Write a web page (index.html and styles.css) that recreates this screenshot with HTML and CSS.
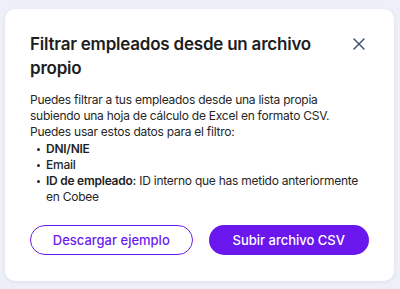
FILE: index.html
```html
<!DOCTYPE html>
<html lang="es">
<head>
<meta charset="utf-8">
<link rel="stylesheet" href="styles.css">
</head>
<body>
<div class="modal">
  <div class="header">
    <h1 class="title">Filtrar empleados desde un archivo propio</h1>
    <button class="close" aria-label="Cerrar">
      <svg width="12" height="12" viewBox="0 0 12 12"><path d="M1 1L11 11M11 1L1 11" stroke="#3e5674" stroke-width="1.5" stroke-linecap="round"/></svg>
    </button>
  </div>
  <div class="body">
    <p>Puedes filtrar a tus empleados desde una lista propia subiendo una hoja de cálculo de Excel en formato CSV. Puedes usar estos datos para el filtro:</p>
    <ul class="list">
      <li><strong>DNI/NIE</strong></li>
      <li><span class="medium">Email</span></li>
      <li><strong>ID de empleado:</strong> ID interno que has metido anteriormente en Cobee</li>
    </ul>
  </div>
  <div class="actions">
    <button class="btn btn-outline">Descargar ejemplo</button>
    <button class="btn btn-primary">Subir archivo CSV</button>
  </div>
</div>
</body>
</html>
```
FILE: styles.css
```css
html, body {
  margin: 0;
  padding: 0;
}
body {
  background: #eef0f9;
  padding: 9px 6px 8px 5px;
  font-family: "Inter", "Open Sans", sans-serif;
  color: #222;
}
.modal {
  background: #fff;
  border-radius: 10px;
  box-shadow: 0 1px 4px rgba(120, 130, 170, 0.15);
  padding: 23px 25px 26px 25px;
  height: 272px;
  box-sizing: border-box;
}
.header {
  display: flex;
  align-items: flex-start;
  justify-content: space-between;
}
.title {
  margin: 0;
  font-size: 17px;
  line-height: 24px;
  font-weight: 600;
  color: #1e1e1e;
  max-width: 300px;
  letter-spacing: -0.22px;
}
.close {
  background: none;
  border: 0;
  padding: 0;
  width: 20px;
  height: 20px;
  margin-top: 2px;
  display: flex;
  align-items: center;
  justify-content: center;
  cursor: pointer;
}
.body {
  margin-top: 12px;
  font-size: 12px;
  line-height: 16.2px;
  letter-spacing: -0.25px;
  color: #262626;
}
.body p {
  margin: 0;
}
.list {
  margin: 0;
  padding: 0 0 0 16px;
  list-style: none;
}
.list li {
  position: relative;
}
.list li::before {
  content: "";
  position: absolute;
  left: -9px;
  top: 7px;
  width: 3px;
  height: 3px;
  border-radius: 50%;
  background: #262626;
}
.list strong {
  font-weight: 600;
  color: #1e1e1e;
}
.medium {
  font-weight: 500;
}
.actions {
  display: flex;
  gap: 16px;
  margin-top: 20px;
}
.btn {
  flex: 1;
  height: 30px;
  border-radius: 15px;
  font-family: inherit;
  font-size: 13px;
  font-weight: 500;
  cursor: pointer;
  box-sizing: border-box;
}
.btn-outline {
  background: #fff;
  border: 1.5px solid #6c1cef;
  color: #6c1cef;
}
.btn-primary {
  background: #6a17ee;
  border: 0;
  color: #fff;
}
```
